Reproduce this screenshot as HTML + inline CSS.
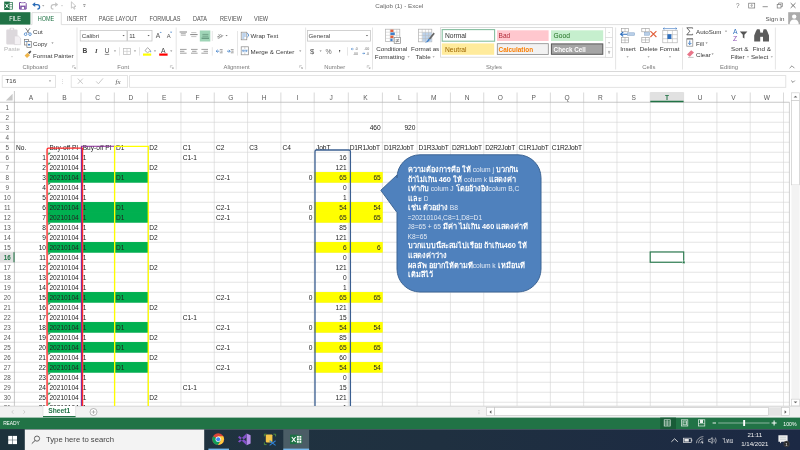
<!DOCTYPE html>
<html lang="en"><head><meta charset="utf-8"><title>Caljob (1) - Excel</title>
<style>
html,body{margin:0;padding:0;background:#fff;}
body{width:800px;height:450px;overflow:hidden;}
#root{position:relative;width:800px;height:450px;overflow:hidden;background:#fff;font-family:"Liberation Sans",sans-serif;}
#root span{position:absolute;white-space:nowrap;line-height:10px;}
#root svg{position:absolute;left:0;top:0;}
#gridtext{position:absolute;left:0;top:0;width:800px;height:405.8px;overflow:hidden;}
.tl{position:absolute;left:0;top:0;width:800px;height:450px;will-change:transform;}
#gridtext{will-change:transform;}
#root .th{overflow:hidden;max-width:132px;}
</style></head><body>
<div id="root">
<svg width="800" height="450" viewBox="0 0 800 450">
<rect x="4.20" y="1.60" width="5.60" height="8.40" fill="#1e7145" />
<rect x="9.20" y="2.40" width="3.20" height="6.80" fill="#fff" stroke="#1e7145" stroke-width="0.7" />
<line x1="9.20" y1="4.60" x2="12.40" y2="4.60" stroke="#1e7145" stroke-width="0.6" />
<line x1="9.20" y1="6.80" x2="12.40" y2="6.80" stroke="#1e7145" stroke-width="0.6" />
<path d="M5.4 3.8L8.4 7.9M8.4 3.8L5.4 7.9" fill="none" stroke="#fff" stroke-width="1.0" />
<path d="M19.5 2.5H25.2L26.2 3.5V9.1H19.5z" fill="#fff" stroke="#7b4ea3" stroke-width="1.0" />
<rect x="20.20" y="5.60" width="5.40" height="3.50" fill="#7b4ea3" />
<rect x="21.70" y="6.90" width="2.40" height="2.20" fill="#fff" />
<rect x="21.00" y="2.50" width="3.40" height="1.60" fill="#e9dff2" />
<path d="M33.0 4.6H37.2Q39.6 4.6 39.6 7.0Q39.6 9.0 37.4 9.2" fill="none" stroke="#2b6cb8" stroke-width="1.3" />
<path d="M32.2 4.6L35.2 2.2V7.0z" fill="#2b6cb8" />
<path d="M42.10 5.25h2.2l-1.10 1.3z" fill="#888" />
<path d="M57.2 4.6H53.6Q51.2 4.6 51.2 7.0Q51.2 9.0 53.4 9.2" fill="none" stroke="#c4c4c4" stroke-width="1.2" />
<path d="M58.2 4.6L55.2 2.2V7.0z" fill="#c4c4c4" />
<path d="M60.90 5.25h2.2l-1.10 1.3z" fill="#c4c4c4" />
<path d="M71.4 1.8V8.2L73.0 6.9L74.1 9.2L75.0 8.8L74.0 6.6L76.0 6.4z" fill="#fff" stroke="#b0b0b0" stroke-width="0.7" />
<line x1="83.20" y1="4.50" x2="85.60" y2="4.50" stroke="#777" stroke-width="0.7" />
<path d="M83.30 5.70h2.2l-1.10 1.2z" fill="#777" />
<rect x="748.70" y="3.20" width="6.00" height="4.80" fill="none" stroke="#777" stroke-width="0.7" />
<path d="M751.7 7.0V4.6M750.6 5.6L751.7 4.5L752.8 5.6" fill="none" stroke="#777" stroke-width="0.6" />
<line x1="762.60" y1="6.70" x2="767.80" y2="6.70" stroke="#777" stroke-width="0.8" />
<rect x="777.20" y="4.40" width="3.80" height="3.60" fill="#fff" stroke="#777" stroke-width="0.7" />
<path d="M778.6 4.4V3.0H782.4V6.6H781.0" fill="none" stroke="#777" stroke-width="0.7" />
<path d="M790.7 3.1L795.5 7.9M795.5 3.1L790.7 7.9" fill="none" stroke="#666" stroke-width="0.9" />
<rect x="0.00" y="12.20" width="30.40" height="12.40" fill="#217346" />
<path d="M30.4 24.6H32.0V12.6H61.3V24.6H787.6" fill="none" stroke="#d6d6d6" stroke-width="0.8" />
<rect x="788.20" y="12.20" width="11.80" height="12.20" fill="#ababab" />
<circle cx="794.2" cy="16.6" r="2.2" fill="#fff"/>
<path d="M789.6 24.4Q789.8 19.6 794.2 19.6Q798.6 19.6 798.8 24.4z" fill="#fff" />
<line x1="0.00" y1="71.50" x2="800.00" y2="71.50" stroke="#d9d9d9" stroke-width="1" />
<line x1="77.00" y1="27.50" x2="77.00" y2="69.50" stroke="#e2e2e2" stroke-width="0.9" />
<line x1="176.20" y1="27.50" x2="176.20" y2="69.50" stroke="#e2e2e2" stroke-width="0.9" />
<line x1="305.60" y1="27.50" x2="305.60" y2="69.50" stroke="#e2e2e2" stroke-width="0.9" />
<line x1="372.50" y1="27.50" x2="372.50" y2="69.50" stroke="#e2e2e2" stroke-width="0.9" />
<line x1="615.60" y1="27.50" x2="615.60" y2="69.50" stroke="#e2e2e2" stroke-width="0.9" />
<line x1="682.50" y1="27.50" x2="682.50" y2="69.50" stroke="#e2e2e2" stroke-width="0.9" />
<line x1="775.40" y1="27.50" x2="775.40" y2="69.50" stroke="#e2e2e2" stroke-width="0.9" />
<path d="M72.6 67.8V65.6H74.8" fill="none" stroke="#aaa" stroke-width="0.55" />
<path d="M73.8 66.8L75.39999999999999 68.39999999999999M75.5 67.19999999999999V68.5H74.19999999999999" fill="none" stroke="#999" stroke-width="0.55" />
<path d="M170.4 67.8V65.6H172.6" fill="none" stroke="#aaa" stroke-width="0.55" />
<path d="M171.6 66.8L173.20000000000002 68.39999999999999M173.3 67.19999999999999V68.5H172.0" fill="none" stroke="#999" stroke-width="0.55" />
<path d="M299.6 67.8V65.6H301.8" fill="none" stroke="#aaa" stroke-width="0.55" />
<path d="M300.8 66.8L302.40000000000003 68.39999999999999M302.5 67.19999999999999V68.5H301.20000000000005" fill="none" stroke="#999" stroke-width="0.55" />
<path d="M367.2 67.8V65.6H369.4" fill="none" stroke="#aaa" stroke-width="0.55" />
<path d="M368.4 66.8L370.0 68.39999999999999M370.09999999999997 67.19999999999999V68.5H368.8" fill="none" stroke="#999" stroke-width="0.55" />
<path d="M789.6 68.2L792.0 65.8L794.4 68.2" fill="none" stroke="#777" stroke-width="0.8" />
<rect x="6.30" y="29.60" width="11.20" height="14.80" fill="#dcd8dc" rx="0.8" />
<rect x="9.60" y="27.80" width="4.60" height="3.00" fill="#dcd8dc" rx="1.0" />
<rect x="10.90" y="28.50" width="2.00" height="1.20" fill="#fff" />
<path d="M14.4 36.0H18.4L20.6 38.2V44.6H14.4z" fill="#f4f1f4" stroke="#d9d4d9" stroke-width="0.7" />
<path d="M10.90 56.20h2.2l-1.10 1.2z" fill="#c4c4c4" />
<path d="M25.6 28.2L29.0 33.0M30.0 28.2L26.6 33.0" fill="none" stroke="#666" stroke-width="0.8" />
<circle cx="25.6" cy="34.2" r="1.3" fill="none" stroke="#3f7fc8" stroke-width="0.8"/><circle cx="30.0" cy="34.2" r="1.3" fill="none" stroke="#3f7fc8" stroke-width="0.8"/>
<rect x="24.40" y="39.40" width="4.20" height="5.60" fill="#fff" stroke="#777" stroke-width="0.7" />
<rect x="26.90" y="41.60" width="4.40" height="5.80" fill="#fff" stroke="#777" stroke-width="0.7" />
<rect x="25.30" y="41.00" width="1.60" height="0.90" fill="#3f7fc8" />
<rect x="28.00" y="43.90" width="2.20" height="1.60" fill="#3f7fc8" />
<path d="M51.40 42.60h2.2l-1.10 1.2z" fill="#777" />
<path d="M24.6 55.6L27.6 52.8L30.0 55.2L27.0 58.0z" fill="#f0b64c" />
<path d="M28.0 52.6L30.4 50.6L31.4 51.8L29.4 54.0z" fill="#555" />
<rect x="80.20" y="30.50" width="46.80" height="10.50" fill="#fff" stroke="#c6c6c6" stroke-width="0.8" />
<rect x="127.60" y="30.50" width="24.40" height="10.50" fill="#fff" stroke="#c6c6c6" stroke-width="0.8" />
<path d="M122.50 35.10h2.2l-1.10 1.2z" fill="#555" />
<path d="M147.50 35.10h2.2l-1.10 1.2z" fill="#555" />
<path d="M159.6 32.8l1.1 -1.1l1.1 1.1" fill="#3f7fc8" />
<path d="M170.0 31.8l1.1 1.1l1.1 -1.1" fill="#3f7fc8" />
<line x1="104.80" y1="54.40" x2="109.20" y2="54.40" stroke="#444" stroke-width="0.6" />
<path d="M113.90 50.60h2.2l-1.10 1.2z" fill="#777" />
<line x1="119.50" y1="47.20" x2="119.50" y2="55.60" stroke="#e0e0e0" stroke-width="0.8" />
<rect x="123.60" y="48.40" width="6.80" height="6.00" fill="#fff" stroke="#b8b8b8" stroke-width="0.7" />
<line x1="127.00" y1="48.40" x2="127.00" y2="54.40" stroke="#c4c4c4" stroke-width="0.6" />
<line x1="123.60" y1="51.40" x2="130.40" y2="51.40" stroke="#c4c4c4" stroke-width="0.6" />
<path d="M133.90 50.60h2.2l-1.10 1.2z" fill="#777" />
<line x1="139.50" y1="47.20" x2="139.50" y2="55.60" stroke="#e0e0e0" stroke-width="0.8" />
<path d="M145.0 50.6L147.6 47.6L150.4 50.4L147.6 52.8z" fill="#fff" stroke="#888" stroke-width="0.7" />
<path d="M150.6 50.2Q151.8 51.8 150.8 52.6Q149.8 51.8 150.6 50.2z" fill="#3f7fc8" />
<rect x="143.00" y="53.50" width="8.20" height="2.20" fill="#ffff00" />
<path d="M153.90 50.60h2.2l-1.10 1.2z" fill="#777" />
<rect x="159.20" y="53.50" width="8.40" height="2.20" fill="#ff0000" />
<path d="M170.10 50.60h2.2l-1.10 1.2z" fill="#777" />
<line x1="179.60" y1="32.00" x2="187.00" y2="32.00" stroke="#777" stroke-width="0.9" />
<line x1="180.80" y1="33.80" x2="185.80" y2="33.80" stroke="#777" stroke-width="0.7" />
<line x1="180.80" y1="35.40" x2="185.80" y2="35.40" stroke="#aaa" stroke-width="0.7" />
<line x1="191.20" y1="32.60" x2="196.40" y2="32.60" stroke="#aaa" stroke-width="0.7" />
<line x1="190.20" y1="34.60" x2="197.60" y2="34.60" stroke="#777" stroke-width="0.9" />
<line x1="191.20" y1="36.60" x2="196.40" y2="36.60" stroke="#aaa" stroke-width="0.7" />
<rect x="199.80" y="30.50" width="10.50" height="11.00" fill="#9fd5b7" />
<line x1="202.40" y1="34.40" x2="208.40" y2="34.40" stroke="#5f8f77" stroke-width="0.7" />
<line x1="202.40" y1="36.20" x2="208.40" y2="36.20" stroke="#5f8f77" stroke-width="0.7" />
<line x1="201.60" y1="38.20" x2="209.00" y2="38.20" stroke="#4a7a62" stroke-width="0.9" />
<line x1="212.30" y1="31.00" x2="212.30" y2="41.00" stroke="#e0e0e0" stroke-width="0.8" />
<line x1="212.30" y1="47.20" x2="212.30" y2="55.60" stroke="#e0e0e0" stroke-width="0.8" />
<line x1="180.00" y1="49.40" x2="186.60" y2="49.40" stroke="#777" stroke-width="0.7" />
<line x1="180.00" y1="51.30" x2="184.40" y2="51.30" stroke="#777" stroke-width="0.7" />
<line x1="180.00" y1="53.20" x2="186.60" y2="53.20" stroke="#777" stroke-width="0.7" />
<line x1="191.00" y1="49.40" x2="197.60" y2="49.40" stroke="#777" stroke-width="0.7" />
<line x1="192.10" y1="51.30" x2="196.50" y2="51.30" stroke="#777" stroke-width="0.7" />
<line x1="191.00" y1="53.20" x2="197.60" y2="53.20" stroke="#777" stroke-width="0.7" />
<line x1="201.40" y1="49.40" x2="208.00" y2="49.40" stroke="#777" stroke-width="0.7" />
<line x1="203.60" y1="51.30" x2="208.00" y2="51.30" stroke="#777" stroke-width="0.7" />
<line x1="201.40" y1="53.20" x2="208.00" y2="53.20" stroke="#777" stroke-width="0.7" />
<path d="M221.0 37.6L223.2 35.0" fill="none" stroke="#666" stroke-width="0.6" />
<path d="M225.50 35.10h2.2l-1.10 1.2z" fill="#777" />
<path d="M219.4 51.2H216.2M217.6 49.8L216.2 51.2L217.6 52.6" fill="none" stroke="#3f7fc8" stroke-width="0.8" />
<line x1="219.80" y1="49.60" x2="222.60" y2="49.60" stroke="#777" stroke-width="0.7" />
<line x1="220.60" y1="51.20" x2="222.60" y2="51.20" stroke="#777" stroke-width="0.7" />
<line x1="219.80" y1="52.80" x2="222.60" y2="52.80" stroke="#777" stroke-width="0.7" />
<path d="M227.0 51.2H230.2M228.8 49.8L230.2 51.2L228.8 52.6" fill="none" stroke="#3f7fc8" stroke-width="0.8" />
<line x1="230.80" y1="49.60" x2="233.60" y2="49.60" stroke="#777" stroke-width="0.7" />
<line x1="231.40" y1="51.20" x2="233.60" y2="51.20" stroke="#777" stroke-width="0.7" />
<line x1="230.80" y1="52.80" x2="233.60" y2="52.80" stroke="#777" stroke-width="0.7" />
<line x1="237.50" y1="31.00" x2="237.50" y2="55.60" stroke="#e0e0e0" stroke-width="0.8" />
<rect x="241.20" y="32.20" width="5.60" height="7.60" fill="#fff" stroke="#888" stroke-width="0.7" />
<line x1="242.20" y1="34.00" x2="245.80" y2="34.00" stroke="#3f7fc8" stroke-width="0.7" />
<line x1="242.20" y1="36.00" x2="245.80" y2="36.00" stroke="#3f7fc8" stroke-width="0.7" />
<line x1="242.20" y1="38.00" x2="244.40" y2="38.00" stroke="#3f7fc8" stroke-width="0.7" />
<path d="M247.0 33.4Q249.0 33.6 248.6 36.0L247.2 37.2" fill="none" stroke="#3f7fc8" stroke-width="0.8" />
<rect x="241.20" y="46.80" width="7.20" height="8.00" fill="#fff" stroke="#888" stroke-width="0.7" />
<rect x="241.90" y="49.20" width="5.80" height="3.20" fill="#dfeaf7" />
<path d="M242.6 50.8H247.0M243.4 49.9L242.5 50.8L243.4 51.7M246.2 49.9L247.1 50.8L246.2 51.7" fill="none" stroke="#3f7fc8" stroke-width="0.6" />
<line x1="244.80" y1="46.80" x2="244.80" y2="49.00" stroke="#aaa" stroke-width="0.5" />
<line x1="244.80" y1="52.60" x2="244.80" y2="54.80" stroke="#aaa" stroke-width="0.5" />
<path d="M299.10 50.60h2.2l-1.10 1.2z" fill="#777" />
<rect x="307.40" y="30.50" width="63.00" height="10.60" fill="#fff" stroke="#c6c6c6" stroke-width="0.8" />
<path d="M365.90 35.10h2.2l-1.10 1.2z" fill="#555" />
<path d="M319.50 50.60h2.2l-1.10 1.2z" fill="#777" />
<line x1="347.50" y1="47.20" x2="347.50" y2="55.60" stroke="#e0e0e0" stroke-width="0.8" />
<path d="M353.6 49.0H351.4M352.2 48.2L351.3 49.0L352.2 49.8" fill="none" stroke="#3f7fc8" stroke-width="0.7" />
<path d="M362.4 53.4H364.6M363.8 52.6L364.7 53.4L363.8 54.2" fill="none" stroke="#3f7fc8" stroke-width="0.7" />
<rect x="385.60" y="29.20" width="14.20" height="12.20" fill="#fff" stroke="#b0b0b0" stroke-width="0.7" />
<line x1="390.20" y1="29.20" x2="390.20" y2="41.40" stroke="#c4c4c4" stroke-width="0.5" />
<line x1="393.60" y1="29.20" x2="393.60" y2="41.40" stroke="#c4c4c4" stroke-width="0.5" />
<line x1="396.80" y1="29.20" x2="396.80" y2="41.40" stroke="#c4c4c4" stroke-width="0.5" />
<line x1="385.60" y1="32.20" x2="399.80" y2="32.20" stroke="#c4c4c4" stroke-width="0.5" />
<line x1="385.60" y1="35.30" x2="399.80" y2="35.30" stroke="#c4c4c4" stroke-width="0.5" />
<line x1="385.60" y1="38.40" x2="399.80" y2="38.40" stroke="#c4c4c4" stroke-width="0.5" />
<rect x="390.40" y="29.60" width="3.00" height="2.40" fill="#e2603c" />
<rect x="390.40" y="32.50" width="4.40" height="2.50" fill="#3f7fc8" />
<rect x="390.40" y="35.60" width="3.00" height="2.50" fill="#e2603c" />
<rect x="390.40" y="38.70" width="2.20" height="2.40" fill="#3f7fc8" />
<rect x="394.20" y="37.60" width="6.40" height="6.00" fill="#fff" stroke="#888" stroke-width="0.7" />
<path d="M395.6 39.8H399.2M395.6 41.4H399.2M398.4 38.8L396.4 42.4" fill="none" stroke="#666" stroke-width="0.6" />
<path d="M407.50 56.40h2.2l-1.10 1.2z" fill="#777" />
<rect x="418.60" y="29.20" width="13.20" height="12.60" fill="#fff" stroke="#b0b0b0" stroke-width="0.7" />
<rect x="422.40" y="32.40" width="9.20" height="9.20" fill="#bdd3ec" />
<line x1="422.20" y1="29.20" x2="422.20" y2="41.80" stroke="#b8b8b8" stroke-width="0.5" />
<line x1="425.40" y1="29.20" x2="425.40" y2="41.80" stroke="#b8b8b8" stroke-width="0.5" />
<line x1="428.60" y1="29.20" x2="428.60" y2="41.80" stroke="#b8b8b8" stroke-width="0.5" />
<line x1="418.60" y1="32.30" x2="431.80" y2="32.30" stroke="#b8b8b8" stroke-width="0.5" />
<line x1="418.60" y1="35.40" x2="431.80" y2="35.40" stroke="#b8b8b8" stroke-width="0.5" />
<line x1="418.60" y1="38.60" x2="431.80" y2="38.60" stroke="#b8b8b8" stroke-width="0.5" />
<path d="M433.6 32.6L434.8 33.8L430.2 39.6L428.8 38.4z" fill="#666" />
<path d="M428.6 38.6L430.0 39.8Q428.4 42.6 424.8 42.8Q427.6 41.4 428.6 38.6z" fill="#3f7fc8" />
<path d="M432.50 56.40h2.2l-1.10 1.2z" fill="#777" />
<rect x="440.60" y="27.60" width="172.00" height="29.60" fill="#fff" stroke="#d4d4d4" stroke-width="0.8" />
<rect x="442.20" y="29.60" width="52.40" height="11.60" fill="#fff" stroke="#86bfa0" stroke-width="1.1" />
<rect x="441.80" y="43.40" width="52.40" height="11.40" fill="#ffeb9c" />
<rect x="497.00" y="30.30" width="51.60" height="10.70" fill="#ffc7ce" />
<rect x="497.30" y="43.70" width="51.00" height="10.80" fill="#f2f2f2" stroke="#8a8a8a" stroke-width="0.8" />
<rect x="551.00" y="30.30" width="52.20" height="10.70" fill="#c6efce" />
<rect x="551.40" y="43.90" width="51.40" height="10.40" fill="#a5a5a5" stroke="#585858" stroke-width="1.0" />
<rect x="605.60" y="27.60" width="7.00" height="9.90" fill="#fff" stroke="#d9d9d9" stroke-width="0.7" />
<rect x="605.60" y="37.50" width="7.00" height="9.90" fill="#fff" stroke="#d9d9d9" stroke-width="0.7" />
<rect x="605.60" y="47.40" width="7.00" height="9.90" fill="#fff" stroke="#d9d9d9" stroke-width="0.7" />
<path d="M608.0 33.0l1.1 -1.1l1.1 1.1z" fill="#c8c8c8" />
<path d="M608.00 42.40h2.2l-1.10 1.2z" fill="#777" />
<line x1="608.00" y1="51.40" x2="610.20" y2="51.40" stroke="#777" stroke-width="0.6" />
<path d="M608.00 52.60h2.2l-1.10 1.2z" fill="#777" />
<rect x="621.40" y="28.40" width="7.20" height="3.40" fill="#fff" stroke="#999" stroke-width="0.6" />
<line x1="625.00" y1="28.40" x2="625.00" y2="31.80" stroke="#999" stroke-width="0.5" />
<rect x="621.40" y="37.40" width="7.20" height="5.40" fill="#fff" stroke="#999" stroke-width="0.6" />
<line x1="625.00" y1="37.40" x2="625.00" y2="42.80" stroke="#999" stroke-width="0.5" />
<line x1="621.40" y1="40.10" x2="628.60" y2="40.10" stroke="#999" stroke-width="0.5" />
<rect x="627.40" y="32.80" width="7.20" height="2.60" fill="#b9cfe8" stroke="#7f9fc6" stroke-width="0.5" />
<path d="M627.2 34.2H620.8M623.2 32.0L620.6 34.2L623.2 36.4" fill="none" stroke="#2f6fbd" stroke-width="1.1" />
<path d="M626.50 56.40h2.2l-1.10 1.2z" fill="#777" />
<rect x="641.80" y="28.40" width="7.40" height="3.40" fill="#fff" stroke="#999" stroke-width="0.6" />
<line x1="645.50" y1="28.40" x2="645.50" y2="31.80" stroke="#999" stroke-width="0.5" />
<rect x="641.80" y="37.40" width="7.40" height="5.00" fill="#fff" stroke="#999" stroke-width="0.6" />
<line x1="645.50" y1="37.40" x2="645.50" y2="42.40" stroke="#999" stroke-width="0.5" />
<line x1="641.80" y1="39.90" x2="649.20" y2="39.90" stroke="#999" stroke-width="0.5" />
<rect x="644.60" y="32.60" width="5.00" height="2.60" fill="#b9cfe8" stroke="#7f9fc6" stroke-width="0.5" />
<path d="M650.4 31.2L656.4 37.0M656.4 31.2L650.4 37.0" fill="none" stroke="#e2603c" stroke-width="1.1" />
<path d="M647.50 56.40h2.2l-1.10 1.2z" fill="#777" />
<rect x="662.80" y="30.60" width="14.40" height="12.20" fill="#fff" stroke="#aaa" stroke-width="0.6" />
<line x1="667.60" y1="30.60" x2="667.60" y2="42.80" stroke="#aaa" stroke-width="0.5" />
<line x1="672.40" y1="30.60" x2="672.40" y2="42.80" stroke="#aaa" stroke-width="0.5" />
<line x1="662.80" y1="34.67" x2="677.20" y2="34.67" stroke="#aaa" stroke-width="0.5" />
<line x1="662.80" y1="38.73" x2="677.20" y2="38.73" stroke="#aaa" stroke-width="0.5" />
<rect x="667.40" y="34.20" width="4.00" height="4.80" fill="#2f6fbd" />
<path d="M663.2 28.6H676.8M664.4 27.6L663.2 28.6L664.4 29.6M675.6 27.6L676.8 28.6L675.6 29.6" fill="none" stroke="#2f6fbd" stroke-width="0.6" />
<path d="M668.90 56.40h2.2l-1.10 1.2z" fill="#777" />
<path d="M692.6 28.6V27.8H686.8L689.8 31.2L686.8 34.8H692.6V33.8" fill="none" stroke="#444" stroke-width="0.8" />
<path d="M724.90 30.80h2.2l-1.10 1.2z" fill="#777" />
<rect x="686.80" y="39.20" width="6.00" height="7.00" fill="#fff" stroke="#888" stroke-width="0.7" />
<line x1="686.60" y1="38.60" x2="693.00" y2="38.60" stroke="#555" stroke-width="0.7" />
<path d="M689.8 40.6V44.4M688.2 43.0L689.8 44.6L691.4 43.0" fill="none" stroke="#2f6fbd" stroke-width="0.9" />
<path d="M705.50 42.60h2.2l-1.10 1.2z" fill="#777" />
<path d="M687.0 54.4L691.2 50.2L694.0 52.6L689.8 56.8z" fill="#e8768a" />
<line x1="688.00" y1="57.40" x2="693.60" y2="57.40" stroke="#999" stroke-width="0.6" />
<path d="M711.50 53.60h2.2l-1.10 1.2z" fill="#777" />
<path d="M739.8 31.6H747.4L744.4 34.8V38.6L742.8 37.4V34.8z" fill="#555" />
<path d="M746.90 56.40h2.2l-1.10 1.2z" fill="#777" />
<path d="M755.8 31.4L757.0 29.2H759.6L760.2 31.4V41.4H754.2V35.6zM767.4 31.4L766.2 29.2H763.6L763.0 31.4V41.4H769.0V35.6z" fill="#5c5c5c" />
<rect x="760.00" y="32.60" width="3.20" height="4.20" fill="#5c5c5c" />
<path d="M770.70 56.40h2.2l-1.10 1.2z" fill="#777" />
<rect x="2.20" y="75.60" width="53.40" height="11.70" fill="#fff" stroke="#dcdcdc" stroke-width="0.8" />
<path d="M48.90 80.60h2.2l-1.10 1.2z" fill="#777" />
<rect x="62.30" y="79.40" width="0.70" height="0.70" fill="#bbb" />
<rect x="62.30" y="81.20" width="0.70" height="0.70" fill="#bbb" />
<rect x="62.30" y="83.00" width="0.70" height="0.70" fill="#bbb" />
<rect x="71.20" y="75.60" width="56.40" height="11.70" fill="#fff" stroke="#dcdcdc" stroke-width="0.8" />
<path d="M77.8 78.6L82.8 83.8M82.8 78.6L77.8 83.8" fill="none" stroke="#bcbcbc" stroke-width="0.8" />
<path d="M96.2 81.4L98.4 83.8L103.0 78.4" fill="none" stroke="#bcbcbc" stroke-width="0.8" />
<rect x="129.60" y="75.60" width="656.20" height="11.70" fill="#fff" stroke="#dcdcdc" stroke-width="0.8" />
<path d="M791.2 80.6L793.0 82.4L794.8 80.6" fill="none" stroke="#666" stroke-width="0.8" />
<rect x="47.71" y="172.25" width="99.93" height="10.00" fill="#00b050" />
<rect x="47.71" y="202.25" width="99.93" height="10.00" fill="#00b050" />
<rect x="47.71" y="212.25" width="99.93" height="10.00" fill="#00b050" />
<rect x="47.71" y="242.25" width="99.93" height="10.00" fill="#00b050" />
<rect x="47.71" y="292.25" width="99.93" height="10.00" fill="#00b050" />
<rect x="47.71" y="322.25" width="99.93" height="10.00" fill="#00b050" />
<rect x="47.71" y="342.25" width="99.93" height="10.00" fill="#00b050" />
<rect x="47.71" y="362.25" width="99.93" height="10.00" fill="#00b050" />
<rect x="314.19" y="172.25" width="68.22" height="10.00" fill="#ffff00" />
<rect x="314.19" y="202.25" width="68.22" height="10.00" fill="#ffff00" />
<rect x="314.19" y="212.25" width="68.22" height="10.00" fill="#ffff00" />
<rect x="314.19" y="242.25" width="68.22" height="10.00" fill="#ffff00" />
<rect x="314.19" y="292.25" width="68.22" height="10.00" fill="#ffff00" />
<rect x="314.19" y="322.25" width="68.22" height="10.00" fill="#ffff00" />
<rect x="314.19" y="342.25" width="68.22" height="10.00" fill="#ffff00" />
<rect x="314.19" y="362.25" width="68.22" height="10.00" fill="#ffff00" />
<line x1="14.40" y1="112.25" x2="789.40" y2="112.25" stroke="#d4d4d4" stroke-width="0.6" />
<line x1="14.40" y1="122.25" x2="789.40" y2="122.25" stroke="#d4d4d4" stroke-width="0.6" />
<line x1="14.40" y1="132.25" x2="789.40" y2="132.25" stroke="#d4d4d4" stroke-width="0.6" />
<line x1="14.40" y1="142.25" x2="789.40" y2="142.25" stroke="#d4d4d4" stroke-width="0.6" />
<line x1="14.40" y1="152.25" x2="789.40" y2="152.25" stroke="#d4d4d4" stroke-width="0.6" />
<line x1="14.40" y1="162.25" x2="789.40" y2="162.25" stroke="#d4d4d4" stroke-width="0.6" />
<line x1="14.40" y1="172.25" x2="789.40" y2="172.25" stroke="#d4d4d4" stroke-width="0.6" />
<line x1="14.40" y1="182.25" x2="789.40" y2="182.25" stroke="#d4d4d4" stroke-width="0.6" />
<line x1="14.40" y1="192.25" x2="789.40" y2="192.25" stroke="#d4d4d4" stroke-width="0.6" />
<line x1="14.40" y1="202.25" x2="789.40" y2="202.25" stroke="#d4d4d4" stroke-width="0.6" />
<line x1="14.40" y1="212.25" x2="789.40" y2="212.25" stroke="#d4d4d4" stroke-width="0.6" />
<line x1="14.40" y1="222.25" x2="789.40" y2="222.25" stroke="#d4d4d4" stroke-width="0.6" />
<line x1="14.40" y1="232.25" x2="789.40" y2="232.25" stroke="#d4d4d4" stroke-width="0.6" />
<line x1="14.40" y1="242.25" x2="789.40" y2="242.25" stroke="#d4d4d4" stroke-width="0.6" />
<line x1="14.40" y1="252.25" x2="789.40" y2="252.25" stroke="#d4d4d4" stroke-width="0.6" />
<line x1="14.40" y1="262.25" x2="789.40" y2="262.25" stroke="#d4d4d4" stroke-width="0.6" />
<line x1="14.40" y1="272.25" x2="789.40" y2="272.25" stroke="#d4d4d4" stroke-width="0.6" />
<line x1="14.40" y1="282.25" x2="789.40" y2="282.25" stroke="#d4d4d4" stroke-width="0.6" />
<line x1="14.40" y1="292.25" x2="789.40" y2="292.25" stroke="#d4d4d4" stroke-width="0.6" />
<line x1="14.40" y1="302.25" x2="789.40" y2="302.25" stroke="#d4d4d4" stroke-width="0.6" />
<line x1="14.40" y1="312.25" x2="789.40" y2="312.25" stroke="#d4d4d4" stroke-width="0.6" />
<line x1="14.40" y1="322.25" x2="789.40" y2="322.25" stroke="#d4d4d4" stroke-width="0.6" />
<line x1="14.40" y1="332.25" x2="789.40" y2="332.25" stroke="#d4d4d4" stroke-width="0.6" />
<line x1="14.40" y1="342.25" x2="789.40" y2="342.25" stroke="#d4d4d4" stroke-width="0.6" />
<line x1="14.40" y1="352.25" x2="789.40" y2="352.25" stroke="#d4d4d4" stroke-width="0.6" />
<line x1="14.40" y1="362.25" x2="789.40" y2="362.25" stroke="#d4d4d4" stroke-width="0.6" />
<line x1="14.40" y1="372.25" x2="789.40" y2="372.25" stroke="#d4d4d4" stroke-width="0.6" />
<line x1="14.40" y1="382.25" x2="789.40" y2="382.25" stroke="#d4d4d4" stroke-width="0.6" />
<line x1="14.40" y1="392.25" x2="789.40" y2="392.25" stroke="#d4d4d4" stroke-width="0.6" />
<line x1="14.40" y1="402.25" x2="789.40" y2="402.25" stroke="#d4d4d4" stroke-width="0.6" />
<line x1="0.00" y1="112.25" x2="14.40" y2="112.25" stroke="#c0c0c0" stroke-width="0.6" />
<line x1="0.00" y1="122.25" x2="14.40" y2="122.25" stroke="#c0c0c0" stroke-width="0.6" />
<line x1="0.00" y1="132.25" x2="14.40" y2="132.25" stroke="#c0c0c0" stroke-width="0.6" />
<line x1="0.00" y1="142.25" x2="14.40" y2="142.25" stroke="#c0c0c0" stroke-width="0.6" />
<line x1="0.00" y1="152.25" x2="14.40" y2="152.25" stroke="#c0c0c0" stroke-width="0.6" />
<line x1="0.00" y1="162.25" x2="14.40" y2="162.25" stroke="#c0c0c0" stroke-width="0.6" />
<line x1="0.00" y1="172.25" x2="14.40" y2="172.25" stroke="#c0c0c0" stroke-width="0.6" />
<line x1="0.00" y1="182.25" x2="14.40" y2="182.25" stroke="#c0c0c0" stroke-width="0.6" />
<line x1="0.00" y1="192.25" x2="14.40" y2="192.25" stroke="#c0c0c0" stroke-width="0.6" />
<line x1="0.00" y1="202.25" x2="14.40" y2="202.25" stroke="#c0c0c0" stroke-width="0.6" />
<line x1="0.00" y1="212.25" x2="14.40" y2="212.25" stroke="#c0c0c0" stroke-width="0.6" />
<line x1="0.00" y1="222.25" x2="14.40" y2="222.25" stroke="#c0c0c0" stroke-width="0.6" />
<line x1="0.00" y1="232.25" x2="14.40" y2="232.25" stroke="#c0c0c0" stroke-width="0.6" />
<line x1="0.00" y1="242.25" x2="14.40" y2="242.25" stroke="#c0c0c0" stroke-width="0.6" />
<line x1="0.00" y1="252.25" x2="14.40" y2="252.25" stroke="#c0c0c0" stroke-width="0.6" />
<line x1="0.00" y1="262.25" x2="14.40" y2="262.25" stroke="#c0c0c0" stroke-width="0.6" />
<line x1="0.00" y1="272.25" x2="14.40" y2="272.25" stroke="#c0c0c0" stroke-width="0.6" />
<line x1="0.00" y1="282.25" x2="14.40" y2="282.25" stroke="#c0c0c0" stroke-width="0.6" />
<line x1="0.00" y1="292.25" x2="14.40" y2="292.25" stroke="#c0c0c0" stroke-width="0.6" />
<line x1="0.00" y1="302.25" x2="14.40" y2="302.25" stroke="#c0c0c0" stroke-width="0.6" />
<line x1="0.00" y1="312.25" x2="14.40" y2="312.25" stroke="#c0c0c0" stroke-width="0.6" />
<line x1="0.00" y1="322.25" x2="14.40" y2="322.25" stroke="#c0c0c0" stroke-width="0.6" />
<line x1="0.00" y1="332.25" x2="14.40" y2="332.25" stroke="#c0c0c0" stroke-width="0.6" />
<line x1="0.00" y1="342.25" x2="14.40" y2="342.25" stroke="#c0c0c0" stroke-width="0.6" />
<line x1="0.00" y1="352.25" x2="14.40" y2="352.25" stroke="#c0c0c0" stroke-width="0.6" />
<line x1="0.00" y1="362.25" x2="14.40" y2="362.25" stroke="#c0c0c0" stroke-width="0.6" />
<line x1="0.00" y1="372.25" x2="14.40" y2="372.25" stroke="#c0c0c0" stroke-width="0.6" />
<line x1="0.00" y1="382.25" x2="14.40" y2="382.25" stroke="#c0c0c0" stroke-width="0.6" />
<line x1="0.00" y1="392.25" x2="14.40" y2="392.25" stroke="#c0c0c0" stroke-width="0.6" />
<line x1="0.00" y1="402.25" x2="14.40" y2="402.25" stroke="#c0c0c0" stroke-width="0.6" />
<line x1="47.71" y1="102.25" x2="47.71" y2="406.00" stroke="#d4d4d4" stroke-width="0.6" />
<line x1="81.02" y1="102.25" x2="81.02" y2="406.00" stroke="#d4d4d4" stroke-width="0.6" />
<line x1="114.33" y1="102.25" x2="114.33" y2="406.00" stroke="#d4d4d4" stroke-width="0.6" />
<line x1="147.64" y1="102.25" x2="147.64" y2="406.00" stroke="#d4d4d4" stroke-width="0.6" />
<line x1="180.95" y1="102.25" x2="180.95" y2="406.00" stroke="#d4d4d4" stroke-width="0.6" />
<line x1="214.26" y1="102.25" x2="214.26" y2="406.00" stroke="#d4d4d4" stroke-width="0.6" />
<line x1="247.57" y1="102.25" x2="247.57" y2="406.00" stroke="#d4d4d4" stroke-width="0.6" />
<line x1="280.88" y1="102.25" x2="280.88" y2="406.00" stroke="#d4d4d4" stroke-width="0.6" />
<line x1="314.19" y1="102.25" x2="314.19" y2="406.00" stroke="#d4d4d4" stroke-width="0.6" />
<line x1="348.30" y1="102.25" x2="348.30" y2="406.00" stroke="#d4d4d4" stroke-width="0.6" />
<line x1="382.41" y1="102.25" x2="382.41" y2="406.00" stroke="#d4d4d4" stroke-width="0.6" />
<line x1="417.12" y1="102.25" x2="417.12" y2="406.00" stroke="#d4d4d4" stroke-width="0.6" />
<line x1="450.43" y1="102.25" x2="450.43" y2="406.00" stroke="#d4d4d4" stroke-width="0.6" />
<line x1="483.74" y1="102.25" x2="483.74" y2="406.00" stroke="#d4d4d4" stroke-width="0.6" />
<line x1="517.05" y1="102.25" x2="517.05" y2="406.00" stroke="#d4d4d4" stroke-width="0.6" />
<line x1="550.36" y1="102.25" x2="550.36" y2="406.00" stroke="#d4d4d4" stroke-width="0.6" />
<line x1="583.67" y1="102.25" x2="583.67" y2="406.00" stroke="#d4d4d4" stroke-width="0.6" />
<line x1="616.98" y1="102.25" x2="616.98" y2="406.00" stroke="#d4d4d4" stroke-width="0.6" />
<line x1="650.29" y1="102.25" x2="650.29" y2="406.00" stroke="#d4d4d4" stroke-width="0.6" />
<line x1="683.60" y1="102.25" x2="683.60" y2="406.00" stroke="#d4d4d4" stroke-width="0.6" />
<line x1="716.91" y1="102.25" x2="716.91" y2="406.00" stroke="#d4d4d4" stroke-width="0.6" />
<line x1="750.22" y1="102.25" x2="750.22" y2="406.00" stroke="#d4d4d4" stroke-width="0.6" />
<line x1="783.53" y1="102.25" x2="783.53" y2="406.00" stroke="#d4d4d4" stroke-width="0.6" />
<rect x="47.91" y="172.05" width="100.03" height="10.60" fill="#00b050" />
<rect x="47.91" y="202.05" width="100.03" height="10.60" fill="#00b050" />
<rect x="47.91" y="212.05" width="100.03" height="10.60" fill="#00b050" />
<rect x="47.91" y="242.05" width="100.03" height="10.60" fill="#00b050" />
<rect x="47.91" y="292.05" width="100.03" height="10.60" fill="#00b050" />
<rect x="47.91" y="322.05" width="100.03" height="10.60" fill="#00b050" />
<rect x="47.91" y="342.05" width="100.03" height="10.60" fill="#00b050" />
<rect x="47.91" y="362.05" width="100.03" height="10.60" fill="#00b050" />
<rect x="314.39" y="172.05" width="68.32" height="10.60" fill="#ffff00" />
<rect x="314.39" y="202.05" width="68.32" height="10.60" fill="#ffff00" />
<rect x="314.39" y="212.05" width="68.32" height="10.60" fill="#ffff00" />
<rect x="314.39" y="242.05" width="68.32" height="10.60" fill="#ffff00" />
<rect x="314.39" y="292.05" width="68.32" height="10.60" fill="#ffff00" />
<rect x="314.39" y="322.05" width="68.32" height="10.60" fill="#ffff00" />
<rect x="314.39" y="342.05" width="68.32" height="10.60" fill="#ffff00" />
<rect x="314.39" y="362.05" width="68.32" height="10.60" fill="#ffff00" />
<line x1="0.00" y1="102.25" x2="789.40" y2="102.25" stroke="#ababab" stroke-width="0.65" />
<line x1="14.40" y1="91.00" x2="14.40" y2="406.00" stroke="#ababab" stroke-width="0.65" />
<line x1="47.71" y1="92.50" x2="47.71" y2="102.25" stroke="#c0c0c0" stroke-width="0.6" />
<line x1="81.02" y1="92.50" x2="81.02" y2="102.25" stroke="#c0c0c0" stroke-width="0.6" />
<line x1="114.33" y1="92.50" x2="114.33" y2="102.25" stroke="#c0c0c0" stroke-width="0.6" />
<line x1="147.64" y1="92.50" x2="147.64" y2="102.25" stroke="#c0c0c0" stroke-width="0.6" />
<line x1="180.95" y1="92.50" x2="180.95" y2="102.25" stroke="#c0c0c0" stroke-width="0.6" />
<line x1="214.26" y1="92.50" x2="214.26" y2="102.25" stroke="#c0c0c0" stroke-width="0.6" />
<line x1="247.57" y1="92.50" x2="247.57" y2="102.25" stroke="#c0c0c0" stroke-width="0.6" />
<line x1="280.88" y1="92.50" x2="280.88" y2="102.25" stroke="#c0c0c0" stroke-width="0.6" />
<line x1="314.19" y1="92.50" x2="314.19" y2="102.25" stroke="#c0c0c0" stroke-width="0.6" />
<line x1="348.30" y1="92.50" x2="348.30" y2="102.25" stroke="#c0c0c0" stroke-width="0.6" />
<line x1="382.41" y1="92.50" x2="382.41" y2="102.25" stroke="#c0c0c0" stroke-width="0.6" />
<line x1="417.12" y1="92.50" x2="417.12" y2="102.25" stroke="#c0c0c0" stroke-width="0.6" />
<line x1="450.43" y1="92.50" x2="450.43" y2="102.25" stroke="#c0c0c0" stroke-width="0.6" />
<line x1="483.74" y1="92.50" x2="483.74" y2="102.25" stroke="#c0c0c0" stroke-width="0.6" />
<line x1="517.05" y1="92.50" x2="517.05" y2="102.25" stroke="#c0c0c0" stroke-width="0.6" />
<line x1="550.36" y1="92.50" x2="550.36" y2="102.25" stroke="#c0c0c0" stroke-width="0.6" />
<line x1="583.67" y1="92.50" x2="583.67" y2="102.25" stroke="#c0c0c0" stroke-width="0.6" />
<line x1="616.98" y1="92.50" x2="616.98" y2="102.25" stroke="#c0c0c0" stroke-width="0.6" />
<line x1="650.29" y1="92.50" x2="650.29" y2="102.25" stroke="#c0c0c0" stroke-width="0.6" />
<line x1="683.60" y1="92.50" x2="683.60" y2="102.25" stroke="#c0c0c0" stroke-width="0.6" />
<line x1="716.91" y1="92.50" x2="716.91" y2="102.25" stroke="#c0c0c0" stroke-width="0.6" />
<line x1="750.22" y1="92.50" x2="750.22" y2="102.25" stroke="#c0c0c0" stroke-width="0.6" />
<line x1="783.53" y1="92.50" x2="783.53" y2="102.25" stroke="#c0c0c0" stroke-width="0.6" />
<line x1="789.40" y1="102.25" x2="789.40" y2="406.00" stroke="#bdbdbd" stroke-width="0.7" />
<path d="M12.6 93.8V100.6H5.8z" fill="#c8c8c8" />
<rect x="650.29" y="92.00" width="33.31" height="9.65" fill="#e1e1e1" />
<line x1="650.29" y1="101.50" x2="683.60" y2="101.50" stroke="#217346" stroke-width="1.3" />
<rect x="0.00" y="252.25" width="13.60" height="10.00" fill="#e1e1e1" />
<line x1="14.00" y1="252.25" x2="14.00" y2="262.25" stroke="#217346" stroke-width="1.1" />
<path d="M48.31 152.75h2.6l-2.6 2.6z" fill="#1e8a3c" />
<path d="M48.31 162.75h2.6l-2.6 2.6z" fill="#1e8a3c" />
<path d="M48.31 172.75h2.6l-2.6 2.6z" fill="#1e8a3c" />
<path d="M48.31 182.75h2.6l-2.6 2.6z" fill="#1e8a3c" />
<path d="M48.31 192.75h2.6l-2.6 2.6z" fill="#1e8a3c" />
<path d="M48.31 202.75h2.6l-2.6 2.6z" fill="#1e8a3c" />
<path d="M48.31 212.75h2.6l-2.6 2.6z" fill="#1e8a3c" />
<path d="M48.31 222.75h2.6l-2.6 2.6z" fill="#1e8a3c" />
<path d="M48.31 232.75h2.6l-2.6 2.6z" fill="#1e8a3c" />
<path d="M48.31 242.75h2.6l-2.6 2.6z" fill="#1e8a3c" />
<path d="M48.31 252.75h2.6l-2.6 2.6z" fill="#1e8a3c" />
<path d="M48.31 262.75h2.6l-2.6 2.6z" fill="#1e8a3c" />
<path d="M48.31 272.75h2.6l-2.6 2.6z" fill="#1e8a3c" />
<path d="M48.31 282.75h2.6l-2.6 2.6z" fill="#1e8a3c" />
<path d="M48.31 292.75h2.6l-2.6 2.6z" fill="#1e8a3c" />
<path d="M48.31 302.75h2.6l-2.6 2.6z" fill="#1e8a3c" />
<path d="M48.31 312.75h2.6l-2.6 2.6z" fill="#1e8a3c" />
<path d="M48.31 322.75h2.6l-2.6 2.6z" fill="#1e8a3c" />
<path d="M48.31 332.75h2.6l-2.6 2.6z" fill="#1e8a3c" />
<path d="M48.31 342.75h2.6l-2.6 2.6z" fill="#1e8a3c" />
<path d="M48.31 352.75h2.6l-2.6 2.6z" fill="#1e8a3c" />
<path d="M48.31 362.75h2.6l-2.6 2.6z" fill="#1e8a3c" />
<path d="M48.31 372.75h2.6l-2.6 2.6z" fill="#1e8a3c" />
<path d="M48.31 382.75h2.6l-2.6 2.6z" fill="#1e8a3c" />
<path d="M48.31 392.75h2.6l-2.6 2.6z" fill="#1e8a3c" />
<path d="M48.31 402.75h2.6l-2.6 2.6z" fill="#1e8a3c" />
<rect x="790.00" y="90.50" width="10.00" height="316.00" fill="#fff" />
<rect x="791.40" y="92.80" width="8.20" height="7.60" fill="#fff" stroke="#d0d0d0" stroke-width="0.7" />
<path d="M793.6 97.6l1.9 -1.9l1.9 1.9z" fill="#666" />
<rect x="791.40" y="100.40" width="8.20" height="84.60" fill="#fff" stroke="#c9c9c9" stroke-width="0.7" />
<rect x="791.40" y="185.00" width="8.20" height="214.00" fill="#f3f3f3" />
<rect x="791.40" y="399.20" width="8.20" height="6.80" fill="#fff" stroke="#d0d0d0" stroke-width="0.7" />
<path d="M793.6 401.4l1.9 1.9l1.9 -1.9z" fill="#666" />
<rect x="0.00" y="406.00" width="800.00" height="11.80" fill="#f2f2f2" />
<line x1="0.00" y1="406.20" x2="800.00" y2="406.20" stroke="#cfcfcf" stroke-width="0.8" />
<path d="M13.4 410.2L11.8 412.0L13.4 413.8" fill="none" stroke="#c6c6c6" stroke-width="0.8" />
<path d="M23.4 410.2L25.0 412.0L23.4 413.8" fill="none" stroke="#c6c6c6" stroke-width="0.8" />
<rect x="43.00" y="405.60" width="32.60" height="11.00" fill="#fff" />
<line x1="43.00" y1="416.60" x2="75.60" y2="416.60" stroke="#217346" stroke-width="1.2" />
<line x1="43.00" y1="406.00" x2="43.00" y2="416.00" stroke="#d8d8d8" stroke-width="0.6" />
<line x1="75.60" y1="406.00" x2="75.60" y2="416.00" stroke="#d8d8d8" stroke-width="0.6" />
<circle cx="93.5" cy="412.0" r="3.5" fill="#fff" stroke="#8a8a8a" stroke-width="0.6"/>
<path d="M91.6 412.0H95.4M93.5 410.1V413.9" fill="none" stroke="#8a8a8a" stroke-width="0.6" />
<rect x="478.60" y="410.20" width="0.70" height="0.70" fill="#aaa" />
<rect x="478.60" y="411.80" width="0.70" height="0.70" fill="#aaa" />
<rect x="478.60" y="413.40" width="0.70" height="0.70" fill="#aaa" />
<rect x="486.40" y="407.40" width="303.00" height="8.40" fill="#e4e4e4" />
<rect x="486.40" y="407.40" width="8.20" height="8.20" fill="#fff" stroke="#c9c9c9" stroke-width="0.6" />
<path d="M491.4 410.2l-1.9 1.8l1.9 1.8z" fill="#555" />
<rect x="494.60" y="407.40" width="274.00" height="8.20" fill="#fff" stroke="#c4c4c4" stroke-width="0.6" />
<rect x="781.60" y="407.40" width="7.80" height="8.20" fill="#fff" stroke="#c9c9c9" stroke-width="0.6" />
<path d="M784.6 410.2l1.9 1.8l-1.9 1.8z" fill="#555" />
<rect x="0.00" y="417.60" width="800.00" height="11.60" fill="#217346" />
<rect x="660.20" y="417.60" width="15.80" height="11.60" fill="#185c37" />
<rect x="664.20" y="419.80" width="6.00" height="6.20" fill="none" stroke="#e8f1ec" stroke-width="0.7" />
<line x1="664.20" y1="422.00" x2="670.20" y2="422.00" stroke="#e8f1ec" stroke-width="0.6" />
<line x1="664.20" y1="424.00" x2="670.20" y2="424.00" stroke="#e8f1ec" stroke-width="0.6" />
<line x1="667.20" y1="419.80" x2="667.20" y2="426.00" stroke="#e8f1ec" stroke-width="0.6" />
<rect x="681.60" y="419.80" width="6.20" height="6.20" fill="none" stroke="#e8f1ec" stroke-width="0.7" />
<rect x="683.00" y="421.00" width="3.40" height="3.80" fill="none" stroke="#e8f1ec" stroke-width="0.7" />
<line x1="683.00" y1="422.80" x2="686.40" y2="422.80" stroke="#e8f1ec" stroke-width="0.5" />
<rect x="698.40" y="419.80" width="6.40" height="6.20" fill="none" stroke="#e8f1ec" stroke-width="0.7" />
<rect x="700.00" y="419.80" width="3.00" height="3.20" fill="#e8f1ec" />
<line x1="698.40" y1="423.60" x2="704.80" y2="423.60" stroke="#e8f1ec" stroke-width="0.5" />
<line x1="712.60" y1="423.00" x2="716.00" y2="423.00" stroke="#fff" stroke-width="0.9" />
<line x1="718.20" y1="423.00" x2="769.60" y2="423.00" stroke="#cfe3d8" stroke-width="0.6" />
<rect x="743.20" y="420.00" width="1.90" height="6.00" fill="#fff" />
<path d="M771.6 423.0H776.6M774.1 420.5V425.5" fill="none" stroke="#fff" stroke-width="1.0" />
<defs><linearGradient id="tb" x1="0" x2="1" y1="0" y2="0"><stop offset="0" stop-color="#20353f"/><stop offset="0.55" stop-color="#1f3040"/><stop offset="1" stop-color="#1c2944"/></linearGradient></defs>
<rect x="0.00" y="429.20" width="800.00" height="20.80" fill="url(#tb)" />
<rect x="0.00" y="429.20" width="24.60" height="20.80" fill="#1d323c" />
<rect x="8.20" y="435.90" width="4.20" height="3.90" fill="#fff" />
<rect x="12.80" y="435.90" width="4.20" height="3.90" fill="#fff" />
<rect x="8.20" y="440.20" width="4.20" height="3.90" fill="#fff" />
<rect x="12.80" y="440.20" width="4.20" height="3.90" fill="#fff" />
<rect x="24.80" y="429.60" width="179.40" height="20.40" fill="#f3f3f3" />
<circle cx="37.0" cy="438.6" r="2.6" fill="none" stroke="#444" stroke-width="0.8"/>
<line x1="35.00" y1="440.60" x2="31.80" y2="443.60" stroke="#444" stroke-width="0.9" />
<circle cx="218.2" cy="439.2" r="5.9" fill="#db4437"/>
<path d="M218.2 439.2L213.1 436.2A5.9 5.9 0 0 0 218.0 445.1L220.9 440.4z" fill="#0f9d58" />
<path d="M218.2 439.2L220.9 440.6L218.0 445.1A5.9 5.9 0 0 0 223.3 436.2H218.2z" fill="#ffcd40" />
<circle cx="218.2" cy="439.2" r="2.6" fill="#fff"/><circle cx="218.2" cy="439.2" r="2.0" fill="#4285f4"/>
<rect x="208.40" y="448.60" width="20.60" height="1.40" fill="#76b9ed" />
<path d="M246.6 433.4L250.6 435.2V443.4L246.6 445.2z" fill="#b48be6" />
<path d="M246.6 433.4L238.0 441.4L239.4 442.6L246.6 437.2zM246.6 445.2L238.0 437.2L239.4 436.0L246.6 441.4z" fill="#8250c8" />
<rect x="265.80" y="434.40" width="6.60" height="8.00" fill="#f3c64a" rx="0.8" />
<path d="M264.4 436.4V434.2H266.6M275.6 436.4V434.2H273.4M264.4 442.4V444.6H266.6" fill="none" stroke="#5aa13c" stroke-width="0.8" />
<path d="M269.6 440.8L275.6 445.4M275.6 440.8L269.6 445.4" fill="none" stroke="#2f7fd0" stroke-width="1.1" />
<rect x="283.30" y="429.20" width="25.80" height="20.80" fill="#4b5d66" />
<rect x="283.30" y="448.60" width="25.80" height="1.40" fill="#76b9ed" />
<rect x="290.00" y="434.60" width="7.60" height="9.60" fill="#1e7145" />
<rect x="296.40" y="435.60" width="5.40" height="7.60" fill="#fff" stroke="#1e7145" stroke-width="0.8" />
<line x1="296.40" y1="438.00" x2="301.80" y2="438.00" stroke="#1e7145" stroke-width="0.6" />
<line x1="296.40" y1="440.60" x2="301.80" y2="440.60" stroke="#1e7145" stroke-width="0.6" />
<line x1="299.20" y1="435.60" x2="299.20" y2="443.20" stroke="#1e7145" stroke-width="0.6" />
<path d="M291.8 437.0L295.6 442.0M295.6 437.0L291.8 442.0" fill="none" stroke="#fff" stroke-width="1.1" />
<path d="M671.4 441.8L674.6 438.8L677.8 441.8" fill="none" stroke="#e8e8e8" stroke-width="0.9" />
<rect x="683.60" y="438.20" width="7.60" height="4.20" fill="none" stroke="#e8e8e8" stroke-width="0.7" />
<rect x="684.40" y="439.00" width="4.40" height="2.60" fill="#e8e8e8" />
<rect x="691.40" y="439.40" width="0.80" height="1.80" fill="#e8e8e8" />
<path d="M696.4 443.2A7 7 0 0 1 703.4 436.6" fill="none" stroke="#c8c8c8" stroke-width="0.7" />
<path d="M698.6 443.2A4.6 4.6 0 0 1 703.2 438.8" fill="none" stroke="#c8c8c8" stroke-width="0.7" />
<path d="M700.8 443.2A2.4 2.4 0 0 1 703.2 441.0" fill="none" stroke="#e8e8e8" stroke-width="0.7" />
<circle cx="702.6" cy="442.8" r="0.7" fill="#e8e8e8"/>
<path d="M708.6 439.4H710.2L712.2 437.6V443.4L710.2 441.6H708.6z" fill="none" stroke="#e8e8e8" stroke-width="0.7" />
<path d="M713.8 438.8Q714.8 440.5 713.8 442.2M715.4 437.6Q717.0 440.5 715.4 443.4" fill="none" stroke="#e8e8e8" stroke-width="0.6" />
<path d="M778.4 435.2H787.6V441.8H781.6L780.0 443.4V441.8H778.4z" fill="#f0f0f0" />
<line x1="780.00" y1="437.20" x2="786.00" y2="437.20" stroke="#9aa" stroke-width="0.5" />
<line x1="780.00" y1="439.20" x2="786.00" y2="439.20" stroke="#9aa" stroke-width="0.5" />
<circle cx="786.6" cy="444.0" r="2.9" fill="#2b2b2b" stroke="#555" stroke-width="0.4"/>
</svg>
<div id="gridtext">
<span style="top:93px;font-size:6.6px;color:#5a5a5a;left:31.05px;transform:translateX(-50%);">A</span>
<span style="top:93px;font-size:6.6px;color:#5a5a5a;left:64.37px;transform:translateX(-50%);">B</span>
<span style="top:93px;font-size:6.6px;color:#5a5a5a;left:97.68px;transform:translateX(-50%);">C</span>
<span style="top:93px;font-size:6.6px;color:#5a5a5a;left:130.99px;transform:translateX(-50%);">D</span>
<span style="top:93px;font-size:6.6px;color:#5a5a5a;left:164.30px;transform:translateX(-50%);">E</span>
<span style="top:93px;font-size:6.6px;color:#5a5a5a;left:197.61px;transform:translateX(-50%);">F</span>
<span style="top:93px;font-size:6.6px;color:#5a5a5a;left:230.92px;transform:translateX(-50%);">G</span>
<span style="top:93px;font-size:6.6px;color:#5a5a5a;left:264.23px;transform:translateX(-50%);">H</span>
<span style="top:93px;font-size:6.6px;color:#5a5a5a;left:297.53px;transform:translateX(-50%);">I</span>
<span style="top:93px;font-size:6.6px;color:#5a5a5a;left:331.25px;transform:translateX(-50%);">J</span>
<span style="top:93px;font-size:6.6px;color:#5a5a5a;left:365.36px;transform:translateX(-50%);">K</span>
<span style="top:93px;font-size:6.6px;color:#5a5a5a;left:399.76px;transform:translateX(-50%);">L</span>
<span style="top:93px;font-size:6.6px;color:#5a5a5a;left:433.77px;transform:translateX(-50%);">M</span>
<span style="top:93px;font-size:6.6px;color:#5a5a5a;left:467.09px;transform:translateX(-50%);">N</span>
<span style="top:93px;font-size:6.6px;color:#5a5a5a;left:500.40px;transform:translateX(-50%);">O</span>
<span style="top:93px;font-size:6.6px;color:#5a5a5a;left:533.71px;transform:translateX(-50%);">P</span>
<span style="top:93px;font-size:6.6px;color:#5a5a5a;left:567.01px;transform:translateX(-50%);">Q</span>
<span style="top:93px;font-size:6.6px;color:#5a5a5a;left:600.33px;transform:translateX(-50%);">R</span>
<span style="top:93px;font-size:6.6px;color:#5a5a5a;left:633.63px;transform:translateX(-50%);">S</span>
<span style="top:93px;font-size:6.6px;color:#217346;left:666.94px;transform:translateX(-50%);font-weight:bold;">T</span>
<span style="top:93px;font-size:6.6px;color:#5a5a5a;left:700.25px;transform:translateX(-50%);">U</span>
<span style="top:93px;font-size:6.6px;color:#5a5a5a;left:733.57px;transform:translateX(-50%);">V</span>
<span style="top:93px;font-size:6.6px;color:#5a5a5a;left:766.88px;transform:translateX(-50%);">W</span>
<span style="top:103px;font-size:6.3px;color:#5a5a5a;left:7.20px;transform:translateX(-50%);">1</span>
<span style="top:113px;font-size:6.3px;color:#5a5a5a;left:7.20px;transform:translateX(-50%);">2</span>
<span style="top:123px;font-size:6.3px;color:#5a5a5a;left:7.20px;transform:translateX(-50%);">3</span>
<span style="top:133px;font-size:6.3px;color:#5a5a5a;left:7.20px;transform:translateX(-50%);">4</span>
<span style="top:143px;font-size:6.3px;color:#5a5a5a;left:7.20px;transform:translateX(-50%);">5</span>
<span style="top:153px;font-size:6.3px;color:#5a5a5a;left:7.20px;transform:translateX(-50%);">6</span>
<span style="top:163px;font-size:6.3px;color:#5a5a5a;left:7.20px;transform:translateX(-50%);">7</span>
<span style="top:173px;font-size:6.3px;color:#5a5a5a;left:7.20px;transform:translateX(-50%);">8</span>
<span style="top:183px;font-size:6.3px;color:#5a5a5a;left:7.20px;transform:translateX(-50%);">9</span>
<span style="top:193px;font-size:6.3px;color:#5a5a5a;left:7.20px;transform:translateX(-50%);">10</span>
<span style="top:203px;font-size:6.3px;color:#5a5a5a;left:7.20px;transform:translateX(-50%);">11</span>
<span style="top:213px;font-size:6.3px;color:#5a5a5a;left:7.20px;transform:translateX(-50%);">12</span>
<span style="top:223px;font-size:6.3px;color:#5a5a5a;left:7.20px;transform:translateX(-50%);">13</span>
<span style="top:233px;font-size:6.3px;color:#5a5a5a;left:7.20px;transform:translateX(-50%);">14</span>
<span style="top:243px;font-size:6.3px;color:#5a5a5a;left:7.20px;transform:translateX(-50%);">15</span>
<span style="top:253px;font-size:6.3px;color:#217346;left:7.20px;transform:translateX(-50%);font-weight:bold;">16</span>
<span style="top:263px;font-size:6.3px;color:#5a5a5a;left:7.20px;transform:translateX(-50%);">17</span>
<span style="top:273px;font-size:6.3px;color:#5a5a5a;left:7.20px;transform:translateX(-50%);">18</span>
<span style="top:283px;font-size:6.3px;color:#5a5a5a;left:7.20px;transform:translateX(-50%);">19</span>
<span style="top:293px;font-size:6.3px;color:#5a5a5a;left:7.20px;transform:translateX(-50%);">20</span>
<span style="top:303px;font-size:6.3px;color:#5a5a5a;left:7.20px;transform:translateX(-50%);">21</span>
<span style="top:313px;font-size:6.3px;color:#5a5a5a;left:7.20px;transform:translateX(-50%);">22</span>
<span style="top:323px;font-size:6.3px;color:#5a5a5a;left:7.20px;transform:translateX(-50%);">23</span>
<span style="top:333px;font-size:6.3px;color:#5a5a5a;left:7.20px;transform:translateX(-50%);">24</span>
<span style="top:343px;font-size:6.3px;color:#5a5a5a;left:7.20px;transform:translateX(-50%);">25</span>
<span style="top:353px;font-size:6.3px;color:#5a5a5a;left:7.20px;transform:translateX(-50%);">26</span>
<span style="top:363px;font-size:6.3px;color:#5a5a5a;left:7.20px;transform:translateX(-50%);">27</span>
<span style="top:373px;font-size:6.3px;color:#5a5a5a;left:7.20px;transform:translateX(-50%);">28</span>
<span style="top:383px;font-size:6.3px;color:#5a5a5a;left:7.20px;transform:translateX(-50%);">29</span>
<span style="top:393px;font-size:6.3px;color:#5a5a5a;left:7.20px;transform:translateX(-50%);">30</span>
<span style="top:403px;font-size:6.3px;color:#5a5a5a;left:7.20px;transform:translateX(-50%);">31</span>
<span style="top:123px;font-size:6.6px;color:#222;right:419.29px;">460</span>
<span style="top:123px;font-size:6.6px;color:#222;right:384.58px;">920</span>
<span style="top:143px;font-size:6.6px;color:#222;left:16.10px;">No.</span>
<span style="top:143px;font-size:6.6px;color:#222;left:49.41px;width:31.11px;overflow:hidden;">Buy-off Pl</span>
<span style="top:143px;font-size:6.6px;color:#222;left:82.72px;width:31.11px;overflow:hidden;">Buy-off Pl</span>
<span style="top:143px;font-size:6.6px;color:#222;left:116.03px;">D1</span>
<span style="top:143px;font-size:6.6px;color:#222;left:149.34px;">D2</span>
<span style="top:143px;font-size:6.6px;color:#222;left:182.65px;">C1</span>
<span style="top:143px;font-size:6.6px;color:#222;left:215.96px;">C2</span>
<span style="top:143px;font-size:6.6px;color:#222;left:249.27px;">C3</span>
<span style="top:143px;font-size:6.6px;color:#222;left:282.58px;">C4</span>
<span style="top:143px;font-size:6.6px;color:#222;left:315.89px;">JobT</span>
<span style="top:143px;font-size:6.6px;color:#222;left:349.80px;letter-spacing:-0.2px;">D1R1JobT</span>
<span style="top:143px;font-size:6.6px;color:#222;left:383.91px;letter-spacing:-0.2px;">D1R2JobT</span>
<span style="top:143px;font-size:6.6px;color:#222;left:418.62px;letter-spacing:-0.2px;">D1R3JobT</span>
<span style="top:143px;font-size:6.6px;color:#222;left:451.93px;letter-spacing:-0.2px;">D2R1JobT</span>
<span style="top:143px;font-size:6.6px;color:#222;left:485.24px;letter-spacing:-0.2px;">D2R2JobT</span>
<span style="top:143px;font-size:6.6px;color:#222;left:518.55px;letter-spacing:-0.2px;">C1R1JobT</span>
<span style="top:143px;font-size:6.6px;color:#222;left:551.86px;letter-spacing:-0.2px;">C1R2JobT</span>
<span style="top:153px;font-size:6.6px;color:#222;right:753.99px;">1</span>
<span style="top:153px;font-size:6.6px;color:#222;left:49.41px;">20210104</span>
<span style="top:153px;font-size:6.6px;color:#222;left:82.72px;">1</span>
<span style="top:153px;font-size:6.6px;color:#222;left:182.65px;">C1-1</span>
<span style="top:153px;font-size:6.6px;color:#222;right:453.40px;">16</span>
<span style="top:163px;font-size:6.6px;color:#222;right:753.99px;">2</span>
<span style="top:163px;font-size:6.6px;color:#222;left:49.41px;">20210104</span>
<span style="top:163px;font-size:6.6px;color:#222;left:82.72px;">1</span>
<span style="top:163px;font-size:6.6px;color:#222;left:149.34px;">D2</span>
<span style="top:163px;font-size:6.6px;color:#222;right:453.40px;">121</span>
<span style="top:173px;font-size:6.6px;color:#222;right:753.99px;">3</span>
<span style="top:173px;font-size:6.6px;color:#222;left:49.41px;">20210104</span>
<span style="top:173px;font-size:6.6px;color:#222;left:82.72px;">1</span>
<span style="top:173px;font-size:6.6px;color:#222;left:116.03px;">D1</span>
<span style="top:173px;font-size:6.6px;color:#222;left:215.96px;">C2-1</span>
<span style="top:173px;font-size:6.6px;color:#222;right:487.51px;">0</span>
<span style="top:173px;font-size:6.6px;color:#222;right:453.40px;">65</span>
<span style="top:173px;font-size:6.6px;color:#222;right:419.29px;">65</span>
<span style="top:183px;font-size:6.6px;color:#222;right:753.99px;">4</span>
<span style="top:183px;font-size:6.6px;color:#222;left:49.41px;">20210104</span>
<span style="top:183px;font-size:6.6px;color:#222;left:82.72px;">1</span>
<span style="top:183px;font-size:6.6px;color:#222;right:453.40px;">0</span>
<span style="top:193px;font-size:6.6px;color:#222;right:753.99px;">5</span>
<span style="top:193px;font-size:6.6px;color:#222;left:49.41px;">20210104</span>
<span style="top:193px;font-size:6.6px;color:#222;left:82.72px;">1</span>
<span style="top:193px;font-size:6.6px;color:#222;right:453.40px;">1</span>
<span style="top:203px;font-size:6.6px;color:#222;right:753.99px;">6</span>
<span style="top:203px;font-size:6.6px;color:#222;left:49.41px;">20210104</span>
<span style="top:203px;font-size:6.6px;color:#222;left:82.72px;">1</span>
<span style="top:203px;font-size:6.6px;color:#222;left:116.03px;">D1</span>
<span style="top:203px;font-size:6.6px;color:#222;left:215.96px;">C2-1</span>
<span style="top:203px;font-size:6.6px;color:#222;right:487.51px;">0</span>
<span style="top:203px;font-size:6.6px;color:#222;right:453.40px;">54</span>
<span style="top:203px;font-size:6.6px;color:#222;right:419.29px;">54</span>
<span style="top:213px;font-size:6.6px;color:#222;right:753.99px;">7</span>
<span style="top:213px;font-size:6.6px;color:#222;left:49.41px;">20210104</span>
<span style="top:213px;font-size:6.6px;color:#222;left:82.72px;">1</span>
<span style="top:213px;font-size:6.6px;color:#222;left:116.03px;">D1</span>
<span style="top:213px;font-size:6.6px;color:#222;left:215.96px;">C2-1</span>
<span style="top:213px;font-size:6.6px;color:#222;right:487.51px;">0</span>
<span style="top:213px;font-size:6.6px;color:#222;right:453.40px;">65</span>
<span style="top:213px;font-size:6.6px;color:#222;right:419.29px;">65</span>
<span style="top:223px;font-size:6.6px;color:#222;right:753.99px;">8</span>
<span style="top:223px;font-size:6.6px;color:#222;left:49.41px;">20210104</span>
<span style="top:223px;font-size:6.6px;color:#222;left:82.72px;">1</span>
<span style="top:223px;font-size:6.6px;color:#222;left:149.34px;">D2</span>
<span style="top:223px;font-size:6.6px;color:#222;right:453.40px;">85</span>
<span style="top:233px;font-size:6.6px;color:#222;right:753.99px;">9</span>
<span style="top:233px;font-size:6.6px;color:#222;left:49.41px;">20210104</span>
<span style="top:233px;font-size:6.6px;color:#222;left:82.72px;">1</span>
<span style="top:233px;font-size:6.6px;color:#222;left:149.34px;">D2</span>
<span style="top:233px;font-size:6.6px;color:#222;right:453.40px;">121</span>
<span style="top:243px;font-size:6.6px;color:#222;right:753.99px;">10</span>
<span style="top:243px;font-size:6.6px;color:#222;left:49.41px;">20210104</span>
<span style="top:243px;font-size:6.6px;color:#222;left:82.72px;">1</span>
<span style="top:243px;font-size:6.6px;color:#222;left:116.03px;">D1</span>
<span style="top:243px;font-size:6.6px;color:#222;right:453.40px;">6</span>
<span style="top:243px;font-size:6.6px;color:#222;right:419.29px;">6</span>
<span style="top:253px;font-size:6.6px;color:#222;right:753.99px;">11</span>
<span style="top:253px;font-size:6.6px;color:#222;left:49.41px;">20210104</span>
<span style="top:253px;font-size:6.6px;color:#222;left:82.72px;">1</span>
<span style="top:253px;font-size:6.6px;color:#222;right:453.40px;">0</span>
<span style="top:263px;font-size:6.6px;color:#222;right:753.99px;">12</span>
<span style="top:263px;font-size:6.6px;color:#222;left:49.41px;">20210104</span>
<span style="top:263px;font-size:6.6px;color:#222;left:82.72px;">1</span>
<span style="top:263px;font-size:6.6px;color:#222;left:149.34px;">D2</span>
<span style="top:263px;font-size:6.6px;color:#222;right:453.40px;">121</span>
<span style="top:273px;font-size:6.6px;color:#222;right:753.99px;">13</span>
<span style="top:273px;font-size:6.6px;color:#222;left:49.41px;">20210104</span>
<span style="top:273px;font-size:6.6px;color:#222;left:82.72px;">1</span>
<span style="top:273px;font-size:6.6px;color:#222;right:453.40px;">0</span>
<span style="top:283px;font-size:6.6px;color:#222;right:753.99px;">14</span>
<span style="top:283px;font-size:6.6px;color:#222;left:49.41px;">20210104</span>
<span style="top:283px;font-size:6.6px;color:#222;left:82.72px;">1</span>
<span style="top:283px;font-size:6.6px;color:#222;right:453.40px;">1</span>
<span style="top:293px;font-size:6.6px;color:#222;right:753.99px;">15</span>
<span style="top:293px;font-size:6.6px;color:#222;left:49.41px;">20210104</span>
<span style="top:293px;font-size:6.6px;color:#222;left:82.72px;">1</span>
<span style="top:293px;font-size:6.6px;color:#222;left:116.03px;">D1</span>
<span style="top:293px;font-size:6.6px;color:#222;left:215.96px;">C2-1</span>
<span style="top:293px;font-size:6.6px;color:#222;right:487.51px;">0</span>
<span style="top:293px;font-size:6.6px;color:#222;right:453.40px;">65</span>
<span style="top:293px;font-size:6.6px;color:#222;right:419.29px;">65</span>
<span style="top:303px;font-size:6.6px;color:#222;right:753.99px;">16</span>
<span style="top:303px;font-size:6.6px;color:#222;left:49.41px;">20210104</span>
<span style="top:303px;font-size:6.6px;color:#222;left:82.72px;">1</span>
<span style="top:303px;font-size:6.6px;color:#222;left:149.34px;">D2</span>
<span style="top:303px;font-size:6.6px;color:#222;right:453.40px;">121</span>
<span style="top:313px;font-size:6.6px;color:#222;right:753.99px;">17</span>
<span style="top:313px;font-size:6.6px;color:#222;left:49.41px;">20210104</span>
<span style="top:313px;font-size:6.6px;color:#222;left:82.72px;">1</span>
<span style="top:313px;font-size:6.6px;color:#222;left:182.65px;">C1-1</span>
<span style="top:313px;font-size:6.6px;color:#222;right:453.40px;">15</span>
<span style="top:323px;font-size:6.6px;color:#222;right:753.99px;">18</span>
<span style="top:323px;font-size:6.6px;color:#222;left:49.41px;">20210104</span>
<span style="top:323px;font-size:6.6px;color:#222;left:82.72px;">1</span>
<span style="top:323px;font-size:6.6px;color:#222;left:116.03px;">D1</span>
<span style="top:323px;font-size:6.6px;color:#222;left:215.96px;">C2-1</span>
<span style="top:323px;font-size:6.6px;color:#222;right:487.51px;">0</span>
<span style="top:323px;font-size:6.6px;color:#222;right:453.40px;">54</span>
<span style="top:323px;font-size:6.6px;color:#222;right:419.29px;">54</span>
<span style="top:333px;font-size:6.6px;color:#222;right:753.99px;">19</span>
<span style="top:333px;font-size:6.6px;color:#222;left:49.41px;">20210104</span>
<span style="top:333px;font-size:6.6px;color:#222;left:82.72px;">1</span>
<span style="top:333px;font-size:6.6px;color:#222;left:149.34px;">D2</span>
<span style="top:333px;font-size:6.6px;color:#222;right:453.40px;">85</span>
<span style="top:343px;font-size:6.6px;color:#222;right:753.99px;">20</span>
<span style="top:343px;font-size:6.6px;color:#222;left:49.41px;">20210104</span>
<span style="top:343px;font-size:6.6px;color:#222;left:82.72px;">1</span>
<span style="top:343px;font-size:6.6px;color:#222;left:116.03px;">D1</span>
<span style="top:343px;font-size:6.6px;color:#222;left:215.96px;">C2-1</span>
<span style="top:343px;font-size:6.6px;color:#222;right:487.51px;">0</span>
<span style="top:343px;font-size:6.6px;color:#222;right:453.40px;">65</span>
<span style="top:343px;font-size:6.6px;color:#222;right:419.29px;">65</span>
<span style="top:353px;font-size:6.6px;color:#222;right:753.99px;">21</span>
<span style="top:353px;font-size:6.6px;color:#222;left:49.41px;">20210104</span>
<span style="top:353px;font-size:6.6px;color:#222;left:82.72px;">1</span>
<span style="top:353px;font-size:6.6px;color:#222;left:149.34px;">D2</span>
<span style="top:353px;font-size:6.6px;color:#222;right:453.40px;">60</span>
<span style="top:363px;font-size:6.6px;color:#222;right:753.99px;">22</span>
<span style="top:363px;font-size:6.6px;color:#222;left:49.41px;">20210104</span>
<span style="top:363px;font-size:6.6px;color:#222;left:82.72px;">1</span>
<span style="top:363px;font-size:6.6px;color:#222;left:116.03px;">D1</span>
<span style="top:363px;font-size:6.6px;color:#222;left:215.96px;">C2-1</span>
<span style="top:363px;font-size:6.6px;color:#222;right:487.51px;">0</span>
<span style="top:363px;font-size:6.6px;color:#222;right:453.40px;">54</span>
<span style="top:363px;font-size:6.6px;color:#222;right:419.29px;">54</span>
<span style="top:373px;font-size:6.6px;color:#222;right:753.99px;">23</span>
<span style="top:373px;font-size:6.6px;color:#222;left:49.41px;">20210104</span>
<span style="top:373px;font-size:6.6px;color:#222;left:82.72px;">1</span>
<span style="top:373px;font-size:6.6px;color:#222;right:453.40px;">0</span>
<span style="top:383px;font-size:6.6px;color:#222;right:753.99px;">24</span>
<span style="top:383px;font-size:6.6px;color:#222;left:49.41px;">20210104</span>
<span style="top:383px;font-size:6.6px;color:#222;left:82.72px;">1</span>
<span style="top:383px;font-size:6.6px;color:#222;left:182.65px;">C1-1</span>
<span style="top:383px;font-size:6.6px;color:#222;right:453.40px;">15</span>
<span style="top:393px;font-size:6.6px;color:#222;right:753.99px;">25</span>
<span style="top:393px;font-size:6.6px;color:#222;left:49.41px;">20210104</span>
<span style="top:393px;font-size:6.6px;color:#222;left:82.72px;">1</span>
<span style="top:393px;font-size:6.6px;color:#222;left:149.34px;">D2</span>
<span style="top:393px;font-size:6.6px;color:#222;right:453.40px;">121</span>
<span style="top:403px;font-size:6.6px;color:#222;right:753.99px;">26</span>
<span style="top:403px;font-size:6.6px;color:#222;left:49.41px;">20210104</span>
<span style="top:403px;font-size:6.6px;color:#222;left:82.72px;">1</span>
<span style="top:403px;font-size:6.6px;color:#222;right:453.40px;">1</span>
</div>
<div class="tl">
<span style="top:1px;font-size:6.25px;color:#666;left:399.30px;transform:translateX(-50%);">Caljob (1) - Excel</span>
<span style="top:1px;font-size:6.4px;color:#777;left:737.80px;transform:translateX(-50%);">?</span>
<span style="top:14px;font-size:6.3px;color:#fff;left:15.40px;transform:translateX(-50%);transform:translateX(-50%) scaleX(0.88);">FILE</span>
<span style="top:14px;font-size:6.3px;color:#217346;left:46.40px;transform:translateX(-50%);transform:translateX(-50%) scaleX(0.88);">HOME</span>
<span style="top:14px;font-size:6.3px;color:#505050;left:77.20px;transform:translateX(-50%);transform:translateX(-50%) scaleX(0.88);">INSERT</span>
<span style="top:14px;font-size:6.3px;color:#505050;left:118.20px;transform:translateX(-50%);transform:translateX(-50%) scaleX(0.88);">PAGE LAYOUT</span>
<span style="top:14px;font-size:6.3px;color:#505050;left:164.60px;transform:translateX(-50%);transform:translateX(-50%) scaleX(0.88);">FORMULAS</span>
<span style="top:14px;font-size:6.3px;color:#505050;left:200.00px;transform:translateX(-50%);transform:translateX(-50%) scaleX(0.88);">DATA</span>
<span style="top:14px;font-size:6.3px;color:#505050;left:231.00px;transform:translateX(-50%);transform:translateX(-50%) scaleX(0.88);">REVIEW</span>
<span style="top:14px;font-size:6.3px;color:#505050;left:261.00px;transform:translateX(-50%);transform:translateX(-50%) scaleX(0.88);">VIEW</span>
<span style="top:14px;font-size:6.2px;color:#555;right:15.60px;">Sign in</span>
<span style="top:62px;font-size:5.9px;color:#7a7a7a;left:35.20px;transform:translateX(-50%);">Clipboard</span>
<span style="top:62px;font-size:5.9px;color:#7a7a7a;left:123.20px;transform:translateX(-50%);">Font</span>
<span style="top:62px;font-size:5.9px;color:#7a7a7a;left:236.60px;transform:translateX(-50%);">Alignment</span>
<span style="top:62px;font-size:5.9px;color:#7a7a7a;left:334.80px;transform:translateX(-50%);">Number</span>
<span style="top:62px;font-size:5.9px;color:#7a7a7a;left:494.00px;transform:translateX(-50%);">Styles</span>
<span style="top:62px;font-size:5.9px;color:#7a7a7a;left:648.80px;transform:translateX(-50%);">Cells</span>
<span style="top:62px;font-size:5.9px;color:#7a7a7a;left:729.00px;transform:translateX(-50%);">Editing</span>
<span style="top:44px;font-size:6.2px;color:#b4b4b4;left:12.00px;transform:translateX(-50%);">Paste</span>
<span style="top:27px;font-size:6.2px;color:#383838;left:33.00px;">Cut</span>
<span style="top:39px;font-size:6.2px;color:#383838;left:33.00px;">Copy</span>
<span style="top:51px;font-size:6.2px;color:#383838;left:33.00px;letter-spacing:-0.03px;">Format Painter</span>
<span style="top:31px;font-size:6.1px;color:#444;left:81.80px;">Calibri</span>
<span style="top:31px;font-size:6.1px;color:#444;left:129.20px;">11</span>
<span style="top:31px;font-size:6.6px;color:#555;left:158.00px;transform:translateX(-50%);">A</span>
<span style="top:31px;font-size:5.8px;color:#555;left:168.60px;transform:translateX(-50%);">A</span>
<span style="top:46px;font-size:6.6px;color:#444;left:85.00px;transform:translateX(-50%);font-weight:bold;">B</span>
<span style="top:46px;font-size:6.6px;color:#444;left:96.40px;transform:translateX(-50%);font-style:italic;font-family:'Liberation Serif',serif;font-weight:bold;">I</span>
<span style="top:46px;font-size:6.4px;color:#444;left:107.00px;transform:translateX(-50%);">U</span>
<span style="top:46px;font-size:6.8px;color:#444;left:163.40px;transform:translateX(-50%);">A</span>
<span style="top:31px;font-size:5.0px;color:#666;left:219.20px;transform:translateX(-50%);transform:translateX(-50%) rotate(-40deg);">ab</span>
<span style="top:31px;font-size:6.2px;color:#383838;left:250.60px;">Wrap Text</span>
<span style="top:47px;font-size:6.2px;color:#383838;left:250.60px;">Merge &amp; Center</span>
<span style="top:31px;font-size:6.1px;color:#444;left:308.60px;">General</span>
<span style="top:47px;font-size:7.6px;color:#555;left:312.20px;transform:translateX(-50%);">$</span>
<span style="top:47px;font-size:6.9px;color:#666;left:328.60px;transform:translateX(-50%);">%</span>
<span style="top:44px;font-size:8.0px;color:#444;left:339.60px;transform:translateX(-50%);font-weight:bold;">,</span>
<span style="top:44px;font-size:3.6px;color:#666;left:356.20px;transform:translateX(-50%);">.0</span>
<span style="top:49px;font-size:3.6px;color:#666;left:355.60px;transform:translateX(-50%);">.00</span>
<span style="top:44px;font-size:3.6px;color:#666;left:366.80px;transform:translateX(-50%);">.00</span>
<span style="top:49px;font-size:3.6px;color:#666;left:367.40px;transform:translateX(-50%);">.0</span>
<span style="top:44px;font-size:6.25px;color:#383838;left:391.80px;transform:translateX(-50%);">Conditional</span>
<span style="top:52px;font-size:6.25px;color:#383838;left:389.80px;transform:translateX(-50%);">Formatting</span>
<span style="top:44px;font-size:6.25px;color:#383838;left:425.20px;transform:translateX(-50%);">Format as</span>
<span style="top:52px;font-size:6.25px;color:#383838;left:423.20px;transform:translateX(-50%);">Table</span>
<span style="top:31px;font-size:6.7px;color:#333;left:445.00px;">Normal</span>
<span style="top:45px;font-size:6.7px;color:#9c6500;left:445.00px;">Neutral</span>
<span style="top:31px;font-size:6.5px;color:#b02a37;left:498.60px;">Bad</span>
<span style="top:45px;font-size:6.4px;color:#fa7d00;left:498.60px;font-weight:bold;">Calculation</span>
<span style="top:31px;font-size:6.7px;color:#1b6b1b;left:553.60px;">Good</span>
<span style="top:45px;font-size:6.3px;color:#fff;left:553.60px;font-weight:bold;">Check Cell</span>
<span style="top:44px;font-size:6.25px;color:#383838;left:628.00px;transform:translateX(-50%);">Insert</span>
<span style="top:44px;font-size:6.25px;color:#383838;left:648.80px;transform:translateX(-50%);">Delete</span>
<span style="top:44px;font-size:6.25px;color:#383838;left:669.60px;transform:translateX(-50%);">Format</span>
<span style="top:27px;font-size:6.2px;color:#383838;left:696.00px;">AutoSum</span>
<span style="top:39px;font-size:6.2px;color:#383838;left:696.00px;">Fill</span>
<span style="top:50px;font-size:6.2px;color:#383838;left:696.00px;">Clear</span>
<span style="top:27px;font-size:6.8px;color:#2f6fbd;left:735.20px;transform:translateX(-50%);">A</span>
<span style="top:34px;font-size:6.8px;color:#8a4fb0;left:735.20px;transform:translateX(-50%);">Z</span>
<span style="top:44px;font-size:6.25px;color:#383838;left:739.80px;transform:translateX(-50%);">Sort &amp;</span>
<span style="top:52px;font-size:6.25px;color:#383838;left:737.60px;transform:translateX(-50%);">Filter</span>
<span style="top:44px;font-size:6.25px;color:#383838;left:761.80px;transform:translateX(-50%);">Find &amp;</span>
<span style="top:52px;font-size:6.25px;color:#383838;left:759.60px;transform:translateX(-50%);">Select</span>
<span style="top:76px;font-size:6.2px;color:#444;left:5.60px;">T16</span>
<span style="top:77px;font-size:6.8px;color:#555;left:118.00px;transform:translateX(-50%);font-style:italic;font-family:'Liberation Serif',serif;">fx</span>
<span style="top:406px;font-size:6.7px;color:#217346;left:59.20px;transform:translateX(-50%);font-weight:bold;">Sheet1</span>
<span style="top:419px;font-size:4.9px;color:#fff;left:3.20px;letter-spacing:-0.1px;">READY</span>
<span style="top:419px;font-size:5.2px;color:#fff;right:3.40px;">100%</span>
<span style="top:435px;font-size:7.7px;color:#444;left:46.00px;">Type here to search</span>
<span style="top:436px;font-size:5.4px;color:#f0f0f0;left:728.00px;transform:translateX(-50%);">ไทย</span>
<span style="top:430px;font-size:6.1px;color:#f0f0f0;left:754.80px;transform:translateX(-50%);">21:11</span>
<span style="top:439px;font-size:6.1px;color:#f0f0f0;left:754.80px;transform:translateX(-50%);">1/14/2021</span>
<span style="top:440px;font-size:4.4px;color:#fff;left:786.60px;transform:translateX(-50%);">1</span>
</div>
<svg width="800" height="450" viewBox="0 0 800 450">
<rect x="650.19" y="251.95" width="33.51" height="10.30" fill="none" stroke="#2a7a4e" stroke-width="1.15" />
<rect x="682.40" y="261.05" width="2.60" height="2.60" fill="#217346" stroke="#fff" stroke-width="0.5" />
<defs><clipPath id="gc"><rect x="0" y="90" width="789.4" height="316"/></clipPath></defs>
<g clip-path="url(#gc)">
<path d="M47.05 420V149.6Q47.05 148.15 48.5 148.15H82.55V420" fill="none" stroke="#ff2a2a" stroke-width="1.35" />
<path d="M81.45 420V146.3H114.6" fill="none" stroke="#8a2c96" stroke-width="1.1" />
<path d="M114.65 420V146.3H148.3V420" fill="none" stroke="#ffff00" stroke-width="1.3" />
<path d="M315.0 420V151.4Q315.0 150.0 316.4 150.0H349.0Q350.4 150.0 350.4 151.4V420" fill="none" stroke="#3a5f91" stroke-width="1.3" />
</g>
<path d="M420.0 154.8H518.0A23 23 0 0 1 541.0 177.8V269.0A23 23 0 0 1 518.0 292.0H420.0A23 23 0 0 1 397.0 269.0V212.5L380.8 190.3L397.0 175.0V177.8A23 23 0 0 1 420.0 154.8z" fill="#4f81bd" stroke="#3c6494" stroke-width="1.0" />
</svg>
<div class="tl">
<span class="th" style="left:407.6px;top:165px;font-size:6.9px;color:#fff;"><b style="color:#ffffff;font-size:7.35px">ความต้องการคือ ให้ </b><i style="font-style:normal;color:#e4ebf5;font-size:6.7px">colum j </i><b style="color:#ffffff;font-size:7.35px">บวกกัน</b></span>
<span class="th" style="left:407.6px;top:175px;font-size:6.9px;color:#fff;"><b style="color:#ffffff;font-size:7.35px">ถ้าไม่เกิน 460 ให้ </b><i style="font-style:normal;color:#e4ebf5;font-size:6.7px">colum k </i><b style="color:#ffffff;font-size:7.35px">แสดงค่า</b></span>
<span class="th" style="left:407.6px;top:184px;font-size:6.9px;color:#fff;"><b style="color:#ffffff;font-size:7.35px">เท่ากับ </b><i style="font-style:normal;color:#e4ebf5;font-size:6.7px">colum J </i><b style="color:#ffffff;font-size:7.35px">โดยอ้างอิง</b><i style="font-style:normal;color:#e4ebf5;font-size:6.7px">colum B,C</i></span>
<span class="th" style="left:407.6px;top:194px;font-size:6.9px;color:#fff;"><b style="color:#ffffff;font-size:7.35px">และ </b><i style="font-style:normal;color:#e4ebf5;font-size:6.7px">D</i></span>
<span class="th" style="left:407.6px;top:203px;font-size:6.9px;color:#fff;"><b style="color:#ffffff;font-size:7.35px">เช่น ตัวอย่าง </b><i style="font-style:normal;color:#e4ebf5;font-size:6.7px">B8</i></span>
<span class="th" style="left:407.6px;top:213px;font-size:6.9px;color:#fff;"><i style="font-style:normal;color:#e4ebf5;font-size:6.7px">=20210104,C8=1,D8=D1</i></span>
<span class="th" style="left:407.6px;top:222px;font-size:6.9px;color:#fff;"><i style="font-style:normal;color:#e4ebf5;font-size:6.7px">J8=65 + 65 </i><b style="color:#ffffff;font-size:7.35px">มีค่า ไม่เกิน 460 แสดงค่าที่</b></span>
<span class="th" style="left:407.6px;top:232px;font-size:6.9px;color:#fff;"><i style="font-style:normal;color:#e4ebf5;font-size:6.7px">K8=65</i></span>
<span class="th" style="left:407.6px;top:241px;font-size:6.9px;color:#fff;"><b style="color:#ffffff;font-size:7.35px">บวกแบบนี้สะสมไปเรื่อย ถ้าเกิน460 ให้</b></span>
<span class="th" style="left:407.6px;top:251px;font-size:6.9px;color:#fff;"><b style="color:#ffffff;font-size:7.35px">แสดงค่าว่าง</b></span>
<span class="th" style="left:407.6px;top:261px;font-size:6.9px;color:#fff;"><b style="color:#ffffff;font-size:7.35px">ผลลัพ อยากให้ตามที่</b><i style="font-style:normal;color:#e4ebf5;font-size:6.7px">colum k </i><b style="color:#ffffff;font-size:7.35px">เหมือนที่</b></span>
<span class="th" style="left:407.6px;top:270px;font-size:6.9px;color:#fff;"><b style="color:#ffffff;font-size:7.35px">เติมสีไว้</b></span>
</div>
</div>
</body></html>
